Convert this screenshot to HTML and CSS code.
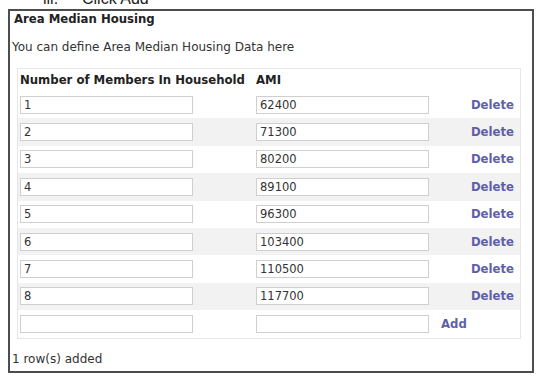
FILE: index.html
```html
<html lang="en">
<head>
    <meta charset="UTF-8">
    <meta name="viewport" content="width=device-width, initial-scale=1.0">
    <title>Area Median Housing</title>
<link rel="stylesheet" href="styles.css">
</head>
<body>
    <div class="step">
        <p><span class="num">iii.</span><span>Click Add</span></p>
    </div>

    <section class="panel">
        <h1>Area Median Housing</h1>
        <p class="intro">You can define Area Median Housing Data here</p>

        <div class="grid">
            <div class="row head">
                <div>Number of Members In Household</div>
                <div>AMI</div>
                <div></div>
            </div>
            <div class="row">
                <div><input type="text" value="1"></div>
                <div><input type="text" value="62400"></div>
                <div class="act"><a href="#">Delete</a></div>
            </div>
            <div class="row">
                <div><input type="text" value="2"></div>
                <div><input type="text" value="71300"></div>
                <div class="act"><a href="#">Delete</a></div>
            </div>
            <div class="row">
                <div><input type="text" value="3"></div>
                <div><input type="text" value="80200"></div>
                <div class="act"><a href="#">Delete</a></div>
            </div>
            <div class="row">
                <div><input type="text" value="4"></div>
                <div><input type="text" value="89100"></div>
                <div class="act"><a href="#">Delete</a></div>
            </div>
            <div class="row">
                <div><input type="text" value="5"></div>
                <div><input type="text" value="96300"></div>
                <div class="act"><a href="#">Delete</a></div>
            </div>
            <div class="row">
                <div><input type="text" value="6"></div>
                <div><input type="text" value="103400"></div>
                <div class="act"><a href="#">Delete</a></div>
            </div>
            <div class="row">
                <div><input type="text" value="7"></div>
                <div><input type="text" value="110500"></div>
                <div class="act"><a href="#">Delete</a></div>
            </div>
            <div class="row">
                <div><input type="text" value="8"></div>
                <div><input type="text" value="117700"></div>
                <div class="act"><a href="#">Delete</a></div>
            </div>
            <div class="row add">
                <div><input type="text" value=""></div>
                <div><input type="text" value=""></div>
                <div class="act"><a href="#">Add</a></div>
            </div>
        </div>

        <p class="status">1 row(s) added</p>
    </section>
</body>
</html>
```

FILE: styles.css
```css
body {
    font-family: "DejaVu Sans", Verdana, sans-serif;
    font-size: 12px;
    color: #333;
    background-color: #fff;
    margin: 0;
    padding: 0;
}
.step {
    height: 9px;
    overflow: hidden;
    padding-left: 43px;
}
.step p {
    margin: -10px 0 0;
    font-family: "Liberation Sans", Arial, sans-serif;
    font-size: 16px;
    line-height: 18px;
    color: #222;
}
.step .num {
    display: inline-block;
    width: 39px;
}
.panel {
    box-sizing: border-box;
    width: 526px;
    height: 364px;
    margin-left: 8px;
    border: 2px solid #4d4d4d;
    padding: 1px 0 0;
}
h1 {
    margin: 0;
    padding-left: 4px;
    font-size: 11.7px;
    line-height: 14px;
    color: #222;
}
.intro {
    margin: 14px 0 0;
    padding-left: 2px;
    line-height: 14px;
}
.grid {
    box-sizing: border-box;
    width: 504px;
    margin: 14px 0 0 7px;
    border: 1px solid #e6e6e6;
}
.row {
    display: grid;
    grid-template-columns: 236px 181px 1fr;
    align-items: center;
    height: 27.4px;
    padding: 0 6px 0 2px;
}
.row:nth-child(odd) {
    background-color: #f2f2f2;
}
.row.head {
    height: 22px;
    font-size: 11.7px;
    font-weight: bold;
    color: #222;
    background-color: #fff;
}
.row.add {
    background-color: #fff;
}
input {
    box-sizing: border-box;
    width: 173px;
    height: 18px;
    margin: 0;
    padding: 0 3px;
    border: 1px solid #cfcfcf;
    font-family: "DejaVu Sans", Verdana, sans-serif;
    font-size: 11.5px;
    color: #333;
    background-color: #fff;
}
.act {
    text-align: right;
}
.add .act {
    text-align: left;
    padding-left: 4px;
}
a {
    color: #5f5fa8;
    font-size: 11.7px;
    font-weight: bold;
    text-decoration: none;
}
.status {
    margin: 13px 0 0;
    padding-left: 2px;
    line-height: 14px;
}
```
